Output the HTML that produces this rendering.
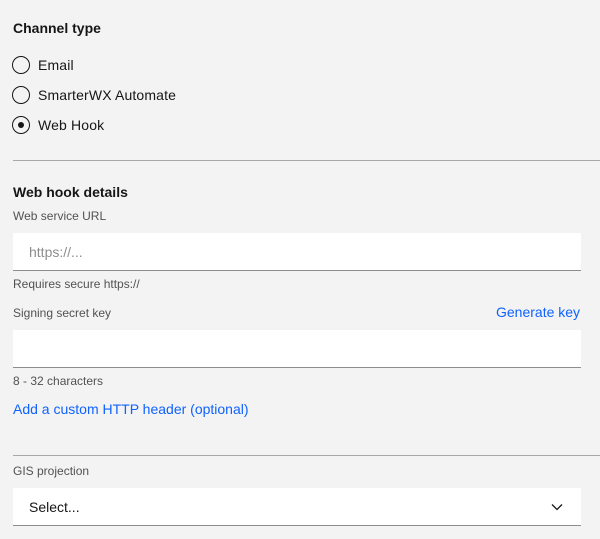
<!DOCTYPE html>
<html><head><style>
body{margin:0;width:600px;height:539px;background:#f3f3f3;font-family:"Liberation Sans",sans-serif;color:#161616;position:relative;overflow:hidden}
.a{position:absolute;white-space:nowrap}
.r{position:absolute;left:12px;width:18px;height:18px;border:1.5px solid #161616;border-radius:50%;box-sizing:border-box}
.in{position:absolute;left:13px;width:568px;height:38px;background:#fff;border-bottom:1.5px solid #8d8d8d;box-sizing:border-box}
.hr{position:absolute;left:13px;right:0;height:1px;background:#a8a8a8}
.lab{font-size:12px;color:#525252}
.link{color:#0f62fe;font-size:14px}
</style></head><body>
<div class="a" style="left:13px;top:20px;font-size:14px;font-weight:bold">Channel type</div>
<div class="r" style="top:56px"></div><div class="a" style="left:38px;top:57px;font-size:14px;letter-spacing:0.15px">Email</div>
<div class="r" style="top:86px"></div><div class="a" style="left:38px;top:87px;font-size:14px;letter-spacing:0.15px">SmarterWX Automate</div>
<div class="r" style="top:116px"><div style="position:absolute;left:4.5px;top:4.5px;width:6px;height:6px;border-radius:50%;background:#161616"></div></div><div class="a" style="left:38px;top:117px;font-size:14px;letter-spacing:0.15px">Web Hook</div>
<div class="hr" style="top:160px"></div>
<div class="a" style="left:13px;top:184px;font-size:14px;font-weight:bold">Web hook details</div>
<div class="a lab" style="left:13px;top:209px">Web service URL</div>
<div class="in" style="top:233px"><span class="a" style="left:16px;top:11px;font-size:14px;color:#8d8d8d">https://...</span></div>
<div class="a lab" style="left:13px;top:277px">Requires secure https://</div>
<div class="a lab" style="left:13px;top:306px">Signing secret key</div>
<div class="a link" style="left:496px;top:304px">Generate key</div>
<div class="in" style="top:330px"></div>
<div class="a lab" style="left:13px;top:374px">8 - 32 characters</div>
<div class="a link" style="left:13px;top:401px">Add a custom HTTP header (optional)</div>
<div class="hr" style="top:455px"></div>
<div class="a lab" style="left:13px;top:464px">GIS projection</div>
<div class="in" style="top:488px"><span class="a" style="left:16px;top:11px;font-size:14px">Select...</span>
<svg class="a" style="left:538px;top:14px" width="12" height="10" viewBox="0 0 12 10"><path d="M1 2.5 L6 7.5 L11 2.5" fill="none" stroke="#161616" stroke-width="1.3"/></svg></div>
</body></html>
